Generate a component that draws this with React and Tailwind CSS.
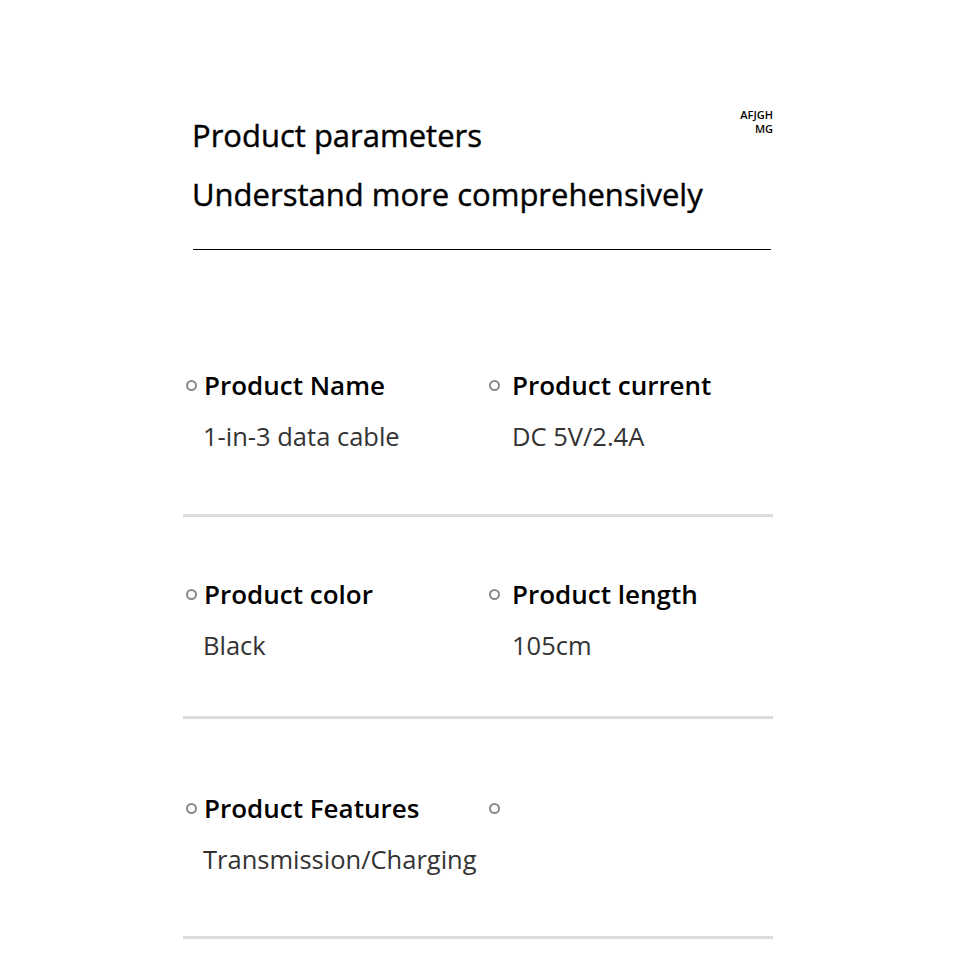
const rows = [
  { cells: [{ t: 'Product Name', v: '1-in-3 data cable' }, { t: 'Product current', v: 'DC 5V/2.4A' }], pt: 'pt-[115px]', mt: 'mt-[11px]', pb: 'pb-[58px]' },
  { cells: [{ t: 'Product color', v: 'Black' }, { t: 'Product length', v: '105cm' }], pt: 'pt-[57px]', mt: 'mt-[11px]', pb: 'pb-[51px]' },
  { cells: [{ t: 'Product Features', v: 'Transmission/Charging' }, { t: '', v: '' }], pt: 'pt-[69px]', mt: 'mt-[11px]', pb: 'pb-[57px]' },
]

function Bullet() {
  return <span className="block w-[11px] h-[11px] rounded-full border-2 border-[#8a8a8a] shrink-0" />
}

export default function App() {
  return (
    <div className="w-[969px] h-[969px] bg-white font-['Open_Sans',sans-serif] overflow-hidden">
      <div className="ml-[183px] w-[590px]">
        {/* header */}
        <div className="relative pt-[106px] pl-[9px]">
          <div className="absolute right-0 top-[108px] text-right text-[11px] leading-[14px] font-semibold text-black">
            AFJGH<br />MG
          </div>
          <h1 className="text-[31px] leading-[59px] text-black [-webkit-text-stroke:0.4px_#000]">Product parameters</h1>
          <h2 className="text-[31px] leading-[59px] text-black [-webkit-text-stroke:0.4px_#000]">Understand more comprehensively</h2>
          <div className="mt-[25px] ml-px mr-[2px] h-px bg-black" />
        </div>

        {rows.map((row, i) => (
          <div key={i}>
            <div className={`grid grid-cols-[306px_1fr] ${row.pt} ${row.pb}`}>
              {row.cells.map((c, j) => (
                <div key={j} className={j === 0 ? 'pl-[3px]' : ''}>
                  <div className={`flex items-center h-[40px] ${j === 0 ? 'gap-[7px]' : 'gap-[12px]'}`}>
                    <Bullet />
                    <span className="text-[26px] font-semibold text-black leading-[40px]">{c.t}</span>
                  </div>
                  {c.v && (
                    <div className={`${row.mt} ${j === 0 ? 'pl-[17px]' : 'pl-[23px]'} text-[25.5px] leading-[40px] text-[#333]`}>{c.v}</div>
                  )}
                </div>
              ))}
            </div>
            <div className="h-[3px] bg-[#dcdcdc]" />
          </div>
        ))}
      </div>
    </div>
  )
}
